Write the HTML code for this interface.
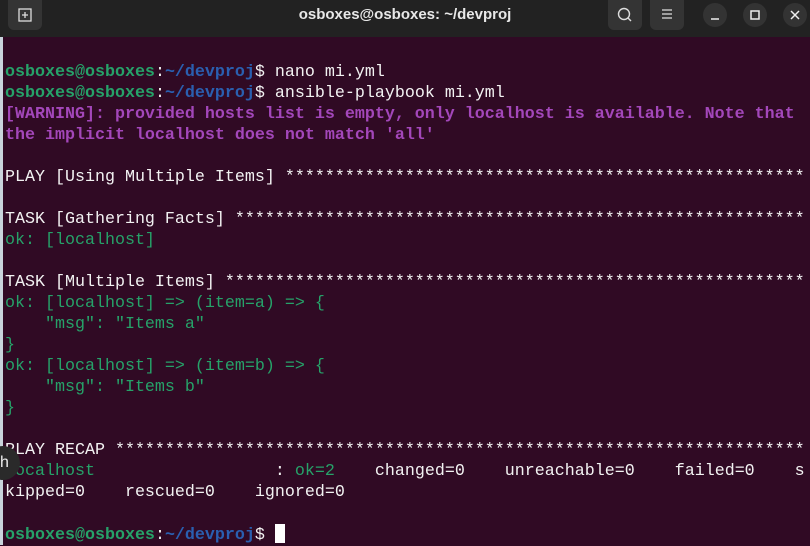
<!DOCTYPE html>
<html><head><meta charset="utf-8"><style>
html,body{margin:0;padding:0;width:810px;height:545px;overflow:hidden;background:#300a24;}
#bar{position:absolute;left:0;top:0;width:810px;height:37px;background:#222222;}
#title{position:absolute;left:0;width:810px;top:6px;height:30px;line-height:28px;text-align:center;color:#e8e8e8;font:bold 15px "Liberation Sans",sans-serif;}
.btn{position:absolute;top:0;width:34px;height:30px;background:#343434;border-radius:0 0 6px 6px;}
.circ{position:absolute;top:3px;width:24px;height:24px;border-radius:50%;background:#333;}
#term{position:absolute;left:5px;top:62px;font-family:"Liberation Mono",monospace;font-size:16.67px;line-height:21px;color:#f2f2f2;white-space:pre;}
.g{color:#26a269;font-weight:bold}.b{color:#2a5fb0;font-weight:bold}.p{color:#a347ba;font-weight:bold}.o{color:#26a269}
#cur{display:inline-block;width:10px;height:19px;background:#fff;vertical-align:-4px}
</style></head><body>
<div id="bar">
<div class="btn" style="left:8px"><svg width="34" height="30"><rect x="11" y="9" width="12" height="12" fill="none" stroke="#ddd" stroke-width="1.3"/><path d="M14 15h6M17 12v6" stroke="#ddd" stroke-width="1.3"/></svg></div>
<div id="title">osboxes@osboxes: ~/devproj</div>
<div class="btn" style="left:608px"><svg width="34" height="30"><circle cx="16" cy="14" r="5.5" fill="none" stroke="#ddd" stroke-width="1.4"/><path d="M20 18l3 3" stroke="#ddd" stroke-width="1.4"/></svg></div>
<div class="btn" style="left:650px"><svg width="34" height="30"><path d="M12 10h10M12 14h10M12 18h10" stroke="#ddd" stroke-width="1.3"/></svg></div>
<div class="circ" style="left:703px"><svg width="24" height="24"><path d="M8 16h8" stroke="#eee" stroke-width="1.5"/></svg></div>
<div class="circ" style="left:743px"><svg width="24" height="24"><rect x="8" y="8" width="8" height="8" fill="none" stroke="#eee" stroke-width="1.5"/></svg></div>
<div class="circ" style="left:783px"><svg width="24" height="24"><path d="M8 8l8 8M16 8l-8 8" stroke="#eee" stroke-width="1.5"/></svg></div>
</div>
<div style="position:absolute;left:0;top:37px;width:3px;height:508px;background:#c9d4dc"></div>
<div id="term"><span class="g">osboxes@osboxes</span>:<span class="b">~/devproj</span>$ nano mi.yml
<span class="g">osboxes@osboxes</span>:<span class="b">~/devproj</span>$ ansible-playbook mi.yml
<span class="p">[WARNING]: provided hosts list is empty, only localhost is available. Note that</span>
<span class="p">the implicit localhost does not match 'all'</span>

PLAY [Using Multiple Items] ****************************************************

TASK [Gathering Facts] *********************************************************
<span class="o">ok: [localhost]</span>

TASK [Multiple Items] **********************************************************
<span class="o">ok: [localhost] =&gt; (item=a) =&gt; {</span>
<span class="o">    "msg": "Items a"</span>
<span class="o">}</span>
<span class="o">ok: [localhost] =&gt; (item=b) =&gt; {</span>
<span class="o">    "msg": "Items b"</span>
<span class="o">}</span>

PLAY RECAP *********************************************************************
<span class="o">localhost</span>                  : <span class="o">ok=2</span>    changed=0    unreachable=0    failed=0    s
kipped=0    rescued=0    ignored=0

<span class="g">osboxes@osboxes</span>:<span class="b">~/devproj</span>$ <span id="cur"></span></div>
<div style="position:absolute;left:-14px;top:446px;width:34px;height:34px;border-radius:50%;background:#2a2a2a;color:#eee;font:16px 'Liberation Sans',sans-serif;line-height:34px;"><span style="position:absolute;left:14px;top:0">h</span></div>
</body></html>
